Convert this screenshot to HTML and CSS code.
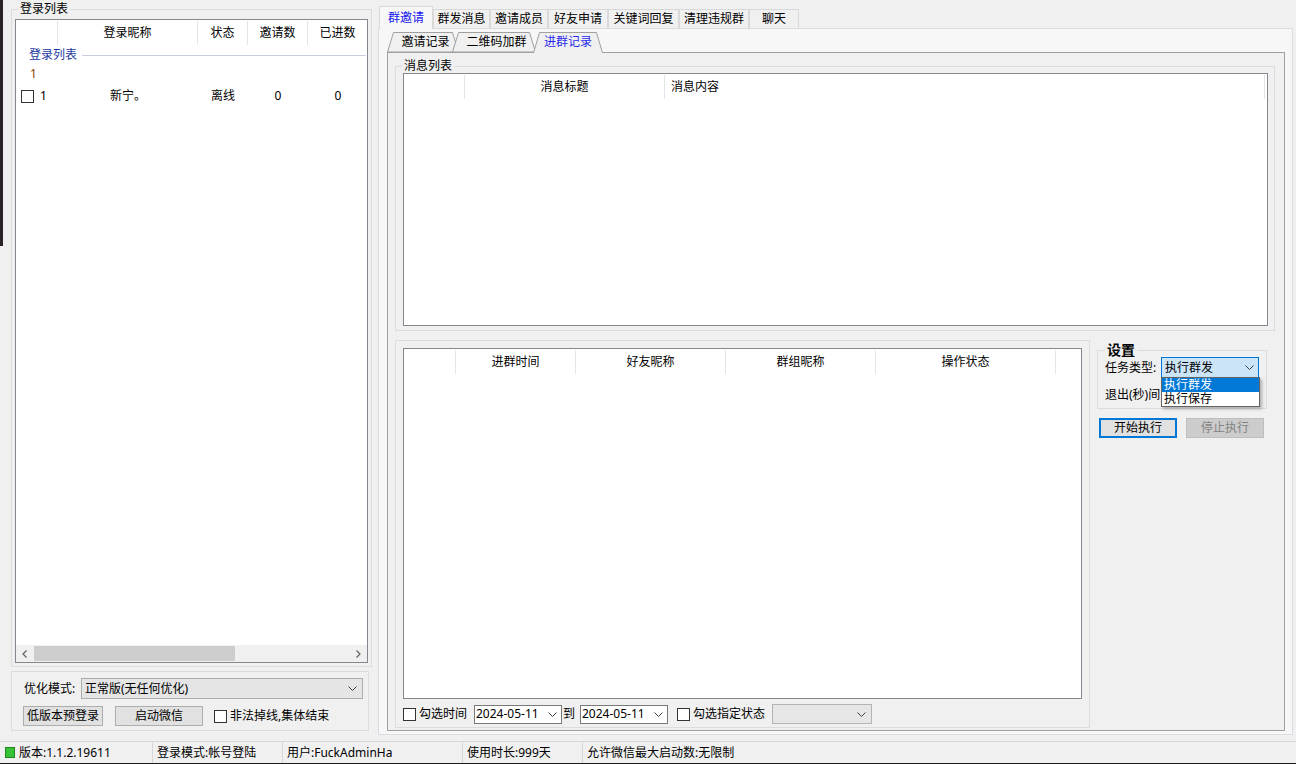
FILE: index.html
```html
<!DOCTYPE html>
<html lang="zh-CN">
<head>
<meta charset="utf-8">
<title>登录列表</title>
<link rel="stylesheet" href="styles.css">
</head>
<body>
<div class="backdrop"></div>
<div class="app">
  <div class="main">
    <aside class="left">
      <div class="gb login-box">
        <div class="gb-title t-login">登录列表</div>
        <div class="lv login-lv">
          <div class="lv-header">
            <div class="hc lc1"></div>
            <div class="hc lc2">登录昵称</div>
            <div class="hc lc3">状态</div>
            <div class="hc lc4">邀请数</div>
            <div class="hc lc5">已进数</div>
          </div>
          <div class="lv-body">
            <div class="lv-group"><span class="g-title">登录列表</span><span class="g-line"></span></div>
            <div class="lv-sub">1</div>
            <div class="lv-row">
              <div class="cell lc1 first"><span class="cb"></span><span>1</span></div>
              <div class="cell lc2">新宁。</div>
              <div class="cell lc3">离线</div>
              <div class="cell lc4">0</div>
              <div class="cell lc5">0</div>
            </div>
          </div>
          <div class="hscroll">
            <span class="sb-arrow"><svg width="5" height="8" viewBox="0 0 5 8"><polyline points="4.5,0.5 1,4 4.5,7.5" fill="none" stroke="#606060" stroke-width="1.2"/></svg></span>
            <span class="sb-track"><span class="sb-thumb"></span></span>
            <span class="sb-arrow"><svg width="5" height="8" viewBox="0 0 5 8"><polyline points="0.5,0.5 4,4 0.5,7.5" fill="none" stroke="#606060" stroke-width="1.2"/></svg></span>
          </div>
        </div>
      </div>
      <div class="gb opt-box">
        <div class="opt-row1">
          <span class="opt-label">优化模式:</span>
          <div class="combo opt-combo"><span>正常版(无任何优化)</span><svg class="chev" width="9" height="5" viewBox="0 0 9 5"><polyline points="0.5,0.5 4.5,4.5 8.5,0.5" fill="none" stroke="#404040" stroke-width="1"/></svg></div>
        </div>
        <div class="opt-row2">
          <button class="btn b-low">低版本预登录</button>
          <button class="btn b-start">启动微信</button>
          <span class="cb cb-opt"></span><span class="cb-label">非法掉线,集体结束</span>
        </div>
      </div>
    </aside>

    <section class="right">
      <div class="tabs">
        <div class="tab sel tw1">群邀请</div>
        <div class="tab tw2">群发消息</div>
        <div class="tab tw3">邀请成员</div>
        <div class="tab tw4">好友申请</div>
        <div class="tab tw5">关键词回复</div>
        <div class="tab tw6">清理违规群</div>
        <div class="tab tw7">聊天</div>
      </div>
      <div class="panel">
        <div class="subtabs">
          <div class="stab sub1"><svg width="72" height="20"><polygon points="0.5,20 6.5,0.5 65.5,0.5 71.5,20" fill="#f0f0f0" stroke="#a0a0a0" stroke-width="1"/></svg><span>邀请记录</span></div>
          <div class="stab sub2"><svg width="84" height="20"><polygon points="0.5,20 6.5,0.5 77.5,0.5 83.5,20" fill="#f0f0f0" stroke="#a0a0a0" stroke-width="1"/></svg><span>二维码加群</span></div>
          <div class="stab sub3 sel"><svg width="70" height="21"><polygon points="0.5,21 6.5,0.5 63.5,0.5 69.5,21" fill="#f0f0f0" stroke="none"/><polyline points="0.5,21 6.5,0.5 63.5,0.5 69.5,21" fill="none" stroke="#a0a0a0" stroke-width="1"/></svg><span>进群记录</span></div>
        </div>
        <div class="subpanel">
          <div class="gb msg-box">
            <div class="gb-title t-msg">消息列表</div>
            <div class="lv msg-lv">
              <div class="lv-header">
                <div class="hc mc1"></div>
                <div class="hc mc2">消息标题</div>
                <div class="hc mc3">消息内容</div>
                <div class="hc mc4"></div>
              </div>
            </div>
          </div>
          <div class="lower">
            <div class="gb join-box">
              <div class="lv join-lv">
                <div class="lv-header">
                  <div class="hc jc1"></div>
                  <div class="hc jc2">进群时间</div>
                  <div class="hc jc3">好友昵称</div>
                  <div class="hc jc4">群组昵称</div>
                  <div class="hc jc5">操作状态</div>
                  <div class="hc jc6"></div>
                </div>
              </div>
              <div class="filter">
                <span class="cb"></span><span class="f-label1">勾选时间</span>
                <div class="date d1"><span>2024-05-11</span><svg class="chev" width="9" height="5" viewBox="0 0 9 5"><polyline points="0.5,0.5 4.5,4.5 8.5,0.5" fill="none" stroke="#404040" stroke-width="1"/></svg></div>
                <span class="f-to">到</span>
                <div class="date d2"><span>2024-05-11</span><svg class="chev" width="9" height="5" viewBox="0 0 9 5"><polyline points="0.5,0.5 4.5,4.5 8.5,0.5" fill="none" stroke="#404040" stroke-width="1"/></svg></div>
                <span class="cb cb-state"></span><span class="f-label2">勾选指定状态</span>
                <div class="combo state-combo"><svg class="chev" width="9" height="5" viewBox="0 0 9 5"><polyline points="0.5,0.5 4.5,4.5 8.5,0.5" fill="none" stroke="#404040" stroke-width="1"/></svg></div>
              </div>
            </div>
            <div class="settings-col">
              <div class="gb settings">
                <div class="gb-title t-set">设置</div>
                <div class="srow srow1">
                  <span class="s-label">任务类型:</span>
                  <div class="combo focus">
                    <span>执行群发</span>
                    <svg class="chev" width="9" height="5" viewBox="0 0 9 5"><polyline points="0.5,0.5 4.5,4.5 8.5,0.5" fill="none" stroke="#404040" stroke-width="1"/></svg>
                    <ul class="dropdown">
                      <li class="dd-sel">执行群发</li>
                      <li>执行保存</li>
                    </ul>
                  </div>
                </div>
                <div class="srow srow2"><span class="s-label">退出(秒)间</span></div>
              </div>
              <div class="s-btns">
                <button class="btn default">开始执行</button>
                <button class="btn disabled" disabled>停止执行</button>
              </div>
            </div>
          </div>
        </div>
      </div>
    </section>
  </div>

  <footer class="status">
    <div class="st sb1"><span class="led"></span><span>版本:1.1.2.19611</span></div>
    <div class="st sb2">登录模式:帐号登陆</div>
    <div class="st sb3">用户:FuckAdminHa</div>
    <div class="st sb4">使用时长:999天</div>
    <div class="st sb5">允许微信最大启动数:无限制</div>
  </footer>
</div>
</body>
</html>
```
FILE: styles.css
```css
* { box-sizing: border-box; }
html, body { margin: 0; padding: 0; }
body {
  width: 1296px;
  height: 764px;
  overflow: hidden;
  position: relative;
  background: #f0f0f0;
  color: #000;
  font-family: "Noto Sans", "Noto Sans CJK SC", sans-serif;
  font-size: 12px;
  line-height: 14px;
}
.backdrop {
  position: absolute;
  left: 0;
  top: 0;
  width: 3px;
  height: 246px;
  background: #2a2425;
}
.app { display: flex; flex-direction: column; height: 764px; }
.main { display: flex; height: 741px; flex: none; }

/* group boxes */
.gb {
  border: 1px solid #dcdcdc;
  display: flex;
  flex-direction: column;
  min-height: 0;
}
.gb-title {
  align-self: flex-start;
  margin-top: -8px;
  padding: 0 2px;
  line-height: 14px;
  height: 14px;
  background: #f0f0f0;
  white-space: nowrap;
}
.t-login { margin-left: 3px; }
.t-msg { margin-left: -1px; }
.t-set {
  margin-top: -9px;
  height: 16px;
  line-height: 16px;
  font-size: 14px;
  font-weight: bold;
}

/* left column */
.left {
  width: 376px;
  flex: none;
  display: flex;
  flex-direction: column;
  padding: 9px 4px 10px 11px;
}
.login-box { flex: 1; padding: 0 3px 3px; }
.login-lv { margin-top: 3px; flex: 1; }

/* list views */
.lv {
  border: 1px solid #828790;
  background: #fff;
  display: flex;
  flex-direction: column;
  min-height: 0;
  overflow: hidden;
}
.lv-header {
  display: flex;
  height: 25px;
  padding-top: 1px;
  flex: none;
}
.hc {
  height: 24px;
  border-right: 1px solid #e5e5e5;
  display: flex;
  align-items: center;
  justify-content: center;
  white-space: nowrap;
  flex: none;
}
.lc1 { width: 42px; }
.lc2 { width: 140px; }
.lc3 { width: 50px; }
.lc4 { width: 60px; }
.lc5 { width: 60px; }

.mc1 { width: 61px; }
.mc2 { width: 200px; }
.mc3 { width: 600px; justify-content: flex-start; padding-left: 6px; }
.mc4 { flex: 1; border-right: none; }

.jc1 { width: 52px; }
.jc2 { width: 120px; }
.jc3 { width: 150px; }
.jc4 { width: 150px; }
.jc5 { width: 180px; }
.jc6 { flex: 1; border-right: none; }

.lv-body { flex: 1; min-height: 0; }
.lv-group {
  height: 20px;
  display: flex;
  align-items: center;
  padding: 0 1px 0 13px;
}
.g-title { color: #1e3a9e; }
.g-line { flex: 1; height: 1px; background: #c8cee2; margin-left: 5px; }
.lv-sub { height: 17px; line-height: 17px; padding-left: 14px; color: #8f4200; }
.lv-row { display: flex; height: 20px; margin-top: 4px; align-items: center; }
.cell { display: flex; align-items: center; justify-content: center; flex: none; height: 20px; }
.cell.first { justify-content: flex-start; padding-left: 5px; }
.cell.first .cb { margin-right: 6px; }

.cb {
  display: inline-block;
  width: 13px;
  height: 13px;
  border: 1px solid #333;
  background: #fff;
  flex: none;
}

.hscroll { height: 17px; display: flex; background: #f0f0f0; flex: none; }
.sb-arrow { width: 17px; display: flex; align-items: center; justify-content: center; flex: none; }
.sb-track { flex: 1; padding-top: 1px; }
.sb-thumb { display: block; width: 201px; height: 15px; margin-left: 1px; background: #cdcdcd; }

/* option box */
.opt-box {
  height: 60px;
  width: 358px;
  margin-top: 4px;
  padding: 6px 5px 0 11px;
  flex: none;
}
.opt-row1 { display: flex; align-items: center; height: 21px; }
.opt-label { width: 57px; margin-left: 1px; flex: none; }
.combo {
  height: 21px;
  border: 1px solid #adadad;
  background: #e5e5e5;
  display: flex;
  align-items: center;
  padding-left: 3px;
  white-space: nowrap;
  flex: none;
}
.combo .chev { margin-left: auto; margin-right: 5px; flex: none; }
.opt-combo { width: 282px; }
.opt-row2 { display: flex; align-items: center; height: 20px; margin-top: 7px; }
.btn {
  font: inherit;
  height: 20px;
  border: 1px solid #adadad;
  background: #e1e1e1;
  color: #000;
  padding: 0;
  margin: 0;
  display: flex;
  align-items: center;
  justify-content: center;
  flex: none;
  line-height: 14px;
}
.b-low { width: 80px; }
.b-start { width: 88px; margin-left: 12px; }
.cb-opt { margin-left: 11px; }
.cb-label { margin-left: 3px; white-space: nowrap; }

/* right side */
.right {
  flex: 1;
  min-width: 0;
  display: flex;
  flex-direction: column;
  padding: 6px 3px 6px 2px;
}
.tabs {
  display: flex;
  align-items: flex-end;
  height: 22px;
  margin-left: 1px;
  position: relative;
  z-index: 1;
  flex: none;
}
.tab {
  height: 19px;
  border: 1px solid #d9d9d9;
  border-bottom: none;
  background: #f0f0f0;
  display: flex;
  align-items: center;
  justify-content: center;
  white-space: nowrap;
  flex: none;
}
.tab.sel {
  height: 23px;
  margin-bottom: -1px;
  background: #f7f7f7;
  color: #1414f0;
}
.tw1 { width: 54px; }
.tw2 { width: 57px; }
.tw3 { width: 58px; }
.tw4 { width: 60px; }
.tw5 { width: 71px; }
.tw6 { width: 70px; }
.tw7 { width: 50px; }

.panel {
  flex: 1;
  min-height: 0;
  border: 1px solid #d9dde3;
  background: #f7f7f7;
  padding: 3px 7px 3px 8px;
  display: flex;
  flex-direction: column;
}
.subtabs { display: flex; height: 20px; position: relative; z-index: 1; flex: none; }
.stab {
  position: relative;
  height: 20px;
  display: flex;
  align-items: center;
  justify-content: center;
  white-space: nowrap;
  flex: none;
}
.stab svg { position: absolute; left: 0; top: 0; }
.stab span { position: relative; }
.sub1 { width: 72px; padding-left: 5px; }
.sub2 { width: 84px; margin-left: -7px; padding-left: 5px; }
.sub3 { width: 70px; margin-left: -3px; height: 21px; margin-bottom: -1px; padding-bottom: 1px; }
.stab.sel { color: #2a2aef; }

.subpanel {
  flex: 1;
  min-height: 0;
  border: 1px solid #a0a0a0;
  background: #f0f0f0;
  padding: 13px 9px 2px 7px;
  display: flex;
  flex-direction: column;
}
.msg-box { height: 265px; flex: none; padding: 0 6px 4px 7px; }
.msg-lv { flex: 1; }

.lower { flex: 1; min-height: 0; display: flex; margin-top: 9px; }
.join-box { width: 695px; flex: none; padding: 7px 7px 3px; }
.join-lv { flex: 1; }
.filter { display: flex; align-items: center; height: 20px; margin-top: 5px; flex: none; white-space: nowrap; }
.f-label1 { margin-left: 3px; width: 48px; }
.date {
  height: 19px;
  width: 88px;
  border: 1px solid #7a7a7a;
  background: #fff;
  display: flex;
  align-items: center;
  padding-left: 1px;
  flex: none;
}
.date .chev { margin-left: auto; margin-right: 4px; }
.d1 { margin-left: 7px; }
.f-to { margin-left: 1px; width: 12px; }
.d2 { margin-left: 5px; }
.cb-state { margin-left: 9px; }
.f-label2 { margin-left: 3px; width: 72px; }
.state-combo { width: 100px; height: 20px; margin-left: 7px; background: #e6e6e6; border-color: #b4b4b4; }

.settings-col { width: 170px; flex: none; margin-left: 7px; display: flex; flex-direction: column; }
.settings { margin-top: 10px; padding: 0 7px 4px; flex: none; }
.srow { display: flex; align-items: center; white-space: nowrap; }
.srow1 { height: 21px; margin-top: -1px; }
.srow2 { height: 19px; margin-top: 7px; }
.s-label { width: 56px; flex: none; }
.combo.focus {
  width: 98px;
  background: #cce4f7;
  border-color: #0078d7;
  position: relative;
}
.combo.focus .chev { margin-right: 4px; }
.dropdown {
  position: absolute;
  left: -1px;
  top: 19px;
  width: 99px;
  margin: 0;
  padding: 0;
  list-style: none;
  background: #fff;
  border: 1px solid #646464;
  box-shadow: 2px 2px 3px rgba(0, 0, 0, 0.28);
  z-index: 5;
}
.dropdown li { height: 14px; line-height: 14px; padding-left: 2px; }
.dropdown li.dd-sel { background: #0078d7; color: #fff; }

.s-btns { display: flex; margin-top: 9px; padding-left: 2px; }
.s-btns .btn { width: 78px; height: 20px; }
.btn.default { border: 2px solid #0078d7; }
.btn.disabled { margin-left: 9px; background: #cccccc; border-color: #bfbfbf; color: #838383; }

/* status bar */
.status {
  height: 23px;
  flex: none;
  display: flex;
  border-top: 1px solid #d7d7d7;
  border-bottom: 1px solid #1c1c1c;
  background: #f0f0f0;
}
.st {
  display: flex;
  align-items: center;
  white-space: nowrap;
  border-right: 1px solid #d7d7d7;
  flex: none;
}
.sb1 { width: 153px; padding-left: 5px; }
.sb2 { width: 130px; padding-left: 4px; }
.sb3 { width: 180px; padding-left: 4px; }
.sb4 { width: 120px; padding-left: 4px; }
.sb5 { flex: 1; padding-left: 4px; border-right: none; }
.led {
  width: 10px;
  height: 11px;
  margin-right: 4px;
  border: 1px solid #1e8a1e;
  background: #38c038;
  flex: none;
}
```
